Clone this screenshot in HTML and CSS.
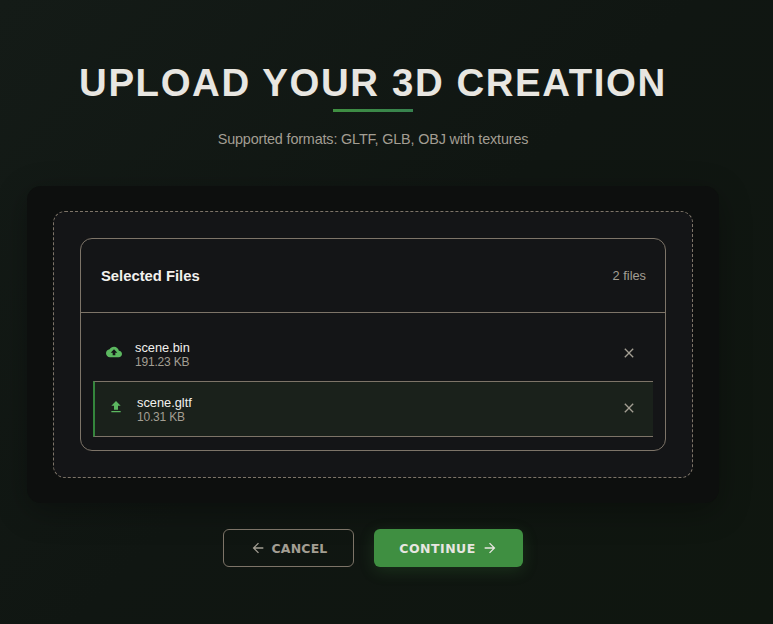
FILE: index.html
```html
<!DOCTYPE html>
<html lang="en">
<head>
<meta charset="utf-8">
<title>Upload</title>
<link rel="stylesheet" href="styles.css">
</head>
<body>
<main class="page">
  <header class="intro">
    <h1 class="title">Upload Your 3D Creation</h1>
    <div class="rule"></div>
    <p class="subtitle">Supported formats: GLTF, GLB, OBJ with textures</p>
  </header>
  <section class="card">
    <div class="dropzone">
      <div class="files">
        <div class="files-head">
          <h2 class="files-title">Selected Files</h2>
          <span class="files-count">2 files</span>
        </div>
        <ul class="list">
          <li class="row">
            <svg class="icon file-icon" viewBox="0 0 24 24"><path d="M19.35 10.04C18.67 6.59 15.64 4 12 4 9.11 4 6.6 5.64 5.35 8.04 2.34 8.36 0 10.91 0 14c0 3.31 2.69 6 6 6h13c2.76 0 5-2.24 5-5 0-2.64-2.05-4.78-4.65-4.96zM14 13v4h-4v-4H7l5-5 5 5h-3z"/></svg>
            <div class="info"><span class="name">scene.bin</span><span class="size">191.23 KB</span></div>
            <svg class="icon remove" viewBox="0 0 24 24"><path d="M19 6.41 17.59 5 12 10.59 6.41 5 5 6.41 10.59 12 5 17.59 6.41 19 12 13.41 17.59 19 19 17.59 13.41 12z"/></svg>
          </li>
          <li class="row row-main">
            <svg class="icon file-icon" viewBox="0 0 24 24"><path d="M5 20h14v-2H5v2zm0-10h4v6h6v-6h4l-7-7-7 7z"/></svg>
            <div class="info"><span class="name">scene.gltf</span><span class="size">10.31 KB</span></div>
            <svg class="icon remove" viewBox="0 0 24 24"><path d="M19 6.41 17.59 5 12 10.59 6.41 5 5 6.41 10.59 12 5 17.59 6.41 19 12 13.41 17.59 19 19 17.59 13.41 12z"/></svg>
          </li>
        </ul>
      </div>
    </div>
  </section>
  <div class="actions">
    <button class="btn btn-cancel"><svg class="icon" viewBox="0 0 24 24"><path d="M20 11H7.83l5.59-5.59L12 4l-8 8 8 8 1.41-1.41L7.83 13H20v-2z"/></svg><span class="label">CANCEL</span></button>
    <button class="btn btn-continue"><span class="label">CONTINUE</span><svg class="icon" viewBox="0 0 24 24"><path d="M12 4l-1.41 1.41L16.17 11H4v2h12.17l-5.58 5.59L12 20l8-8z"/></svg></button>
  </div>
</main>
</body>
</html>
```
FILE: styles.css
```css
* { box-sizing: border-box; margin: 0; padding: 0; }
body {
  height: 624px;
  overflow: hidden;
  font-family: "Liberation Sans", Arial, sans-serif;
  color: #e8e6e1;
  background: linear-gradient(135deg, #141b17 0%, #101612 50%, #0f160f 100%);
}
.page { width: 746px; padding: 61px 27px 0; }
.intro { display: flex; flex-direction: column; align-items: center; height: 125px; }
.title {
  font-size: 38.4px;
  line-height: 44px;
  letter-spacing: 1.6px;
  text-transform: uppercase;
  white-space: nowrap;
}
.rule { width: 80px; height: 3px; margin-top: 4px; background: linear-gradient(90deg, #3f8f41, #37824f); }
.subtitle { margin-top: 18px; font-size: 14.4px; line-height: 18px; letter-spacing: -0.16px; color: #a39e93; }
.card {
  height: 317px;
  padding: 25px 26px;
  border-radius: 14px;
  background: #0d0f0e;
  box-shadow: 0 8px 32px rgba(0, 0, 0, 0.3);
}
.dropzone { height: 267px; padding: 26px; border: 1px dashed #7d7468; border-radius: 12px; background: #141517; }
.files { height: 213px; border: 1px solid #7d7468; border-radius: 12px; }
.files-head {
  display: flex;
  align-items: center;
  justify-content: space-between;
  height: 74px;
  padding: 0 19px 0 20px;
  border-bottom: 1px solid #7d7468;
}
.files-title { font-size: 14.8px; line-height: 18px; color: #f2f1ee; }
.files-count { font-size: 12.8px; color: #a39e93; }
.list { list-style: none; padding: 13px 12px 0; }
.row { display: flex; align-items: center; gap: 13px; height: 55px; padding: 0 16px 0 13px; }
.row-main {
  height: 56px;
  border-top: 1px solid #7d7468;
  border-bottom: 1px solid #7d7468;
  border-left: 2px solid #34853c;
  background: #1a211b;
}
.icon { width: 16px; height: 16px; flex: none; fill: currentColor; }
.file-icon { margin-bottom: 3px; color: #5cb860; }
.row-main .file-icon { margin-bottom: 5px; }
.info { display: flex; flex: 1; flex-direction: column; padding-top: 2px; }
.row-main .info { padding-top: 0; }
.name { font-size: 12.8px; line-height: 15px; color: #f2f1ee; }
.size { padding-top: 1px; font-size: 12px; line-height: 13px; letter-spacing: -0.2px; color: #a39e93; }
.remove { margin-bottom: 2px; color: #a39e93; }
.actions { display: flex; justify-content: center; gap: 20px; margin-top: 26px; }
.btn {
  display: flex;
  align-items: center;
  justify-content: center;
  height: 38px;
  gap: 6px;
  border: 0;
  border-radius: 6px;
  font: 700 12.5px/18px "DejaVu Sans", Verdana, sans-serif;
  letter-spacing: 0.15px;
}
.label { padding-top: 1px; }
.btn-cancel { width: 131px; border: 1px solid #7d7468; background: transparent; color: #a39e93; }
.btn-continue { width: 149px; background: #3f8f41; color: #e8e6e1; letter-spacing: 0.5px; box-shadow: 0 4px 15px rgba(63, 143, 65, 0.22); }
```
